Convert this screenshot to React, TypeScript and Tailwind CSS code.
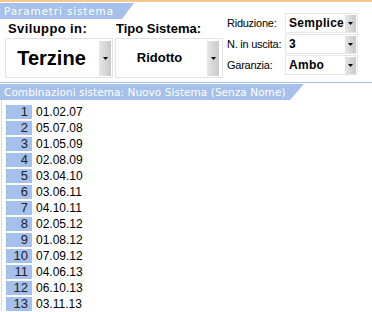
import React from "react";

const Arrow = () => (
  <svg width="5" height="3" viewBox="0 0 5 3" className="block">
    <polygon points="0,0 5,0 2.5,3" fill="#000" />
  </svg>
);

const DropBtn = ({ cls }: { cls: string }) => (
  <div className={`flex items-center justify-center bg-gradient-to-r from-[#e6e6e6] to-[#c9c9c9] ${cls}`}>
    <Arrow />
  </div>
);

const rows = [
  "01.02.07",
  "05.07.08",
  "01.05.09",
  "02.08.09",
  "03.04.10",
  "03.06.11",
  "04.10.11",
  "02.05.12",
  "01.08.12",
  "07.09.12",
  "04.06.13",
  "06.10.13",
  "03.11.13",
];

export default function App() {
  return (
    <div className="w-[372px] h-[312px] bg-white overflow-hidden relative" style={{ fontFamily: '"Liberation Sans", Arial, sans-serif' }}>
      <div className="h-[2px] bg-[#f6c88c]" />
      <div className="flex">
        {/* left part */}
        <div className="w-[226px] flex flex-col">
          <div className="mt-[1px] h-[16px] w-[134px] bg-[#a5c0ea] [clip-path:polygon(0_0,100%_0,calc(100%-12px)_100%,0_100%)] text-white text-[10.5px] leading-[16px] pl-[4px] tracking-[0.85px] whitespace-nowrap" style={{ fontFamily: '"DejaVu Sans", Verdana, sans-serif' }}>
            Parametri sistema
          </div>
          <div className="flex mt-[1px]">
            <div className="w-[111px] pl-[5px] flex flex-col">
              <div className="h-[18px] pl-[3px] text-[13px] leading-[18px] font-bold text-black tracking-[0.4px]">Sviluppo in:</div>
              <div className="h-[40px] w-[108px] border border-[#e3e3e3] flex items-center">
                <div className="flex-1 text-center text-[20px] font-bold text-black pr-[2px]">Terzine</div>
                <DropBtn cls="w-[12px] h-[35px] mr-[1px]" />
              </div>
            </div>
            <div className="w-[112px] pl-[4px] flex flex-col">
              <div className="h-[18px] pl-[1px] text-[13px] leading-[18px] font-bold text-black">Tipo Sistema:</div>
              <div className="h-[40px] w-[108px] border border-[#e3e3e3] flex items-center">
                <div className="flex-1 text-center text-[13px] font-bold text-black pr-[4px]">Ridotto</div>
                <DropBtn cls="w-[12px] h-[35px] mr-[3px]" />
              </div>
            </div>
          </div>
        </div>
        {/* right part */}
        <div className="flex-1 flex flex-col pt-[11px] gap-[1px]">
          {[
            ["Riduzione:", "Semplice"],
            ["N. in uscita:", "3"],
            ["Garanzia:", "Ambo"],
          ].map(([l, v]) => (
            <div key={l} className="flex h-[20px] items-center">
              <div className="w-[59px] pl-[1px] text-[11px] tracking-[-0.25px] text-black whitespace-nowrap">{l}</div>
              <div className="w-[73px] h-[20px] border border-[#e6e6e6] flex items-center">
                <div className="flex-1 pl-[3px] text-[12px] font-bold text-black tracking-[0.3px]">{v}</div>
                <DropBtn cls="w-[11px] h-[17px] mr-[1px]" />
              </div>
            </div>
          ))}
        </div>
      </div>
      {/* second section */}
      <div className="mt-[4px] border-t border-[#a5c0ea]">
        <div className="mt-[1px] h-[16px] w-[304px] bg-[#a5c0ea] [clip-path:polygon(0_0,100%_0,calc(100%-14px)_100%,0_100%)] text-white text-[10.5px] leading-[16px] pl-[4px] tracking-[0.05px] whitespace-nowrap" style={{ fontFamily: '"DejaVu Sans", Verdana, sans-serif' }}>
          Combinazioni sistema: Nuovo Sistema (Senza Nome)
        </div>
      </div>
      <div className="ml-[1px] border-l border-[#d8d8d8] pl-[4px] pt-[5px] flex flex-col gap-[2px]">
        {rows.map((r, i) => (
          <div key={i} className="flex h-[14px] items-center">
            <div className="w-[26px] h-[14px] bg-[#a5c0ea] text-right pr-[4px] text-[13px] leading-[14px] text-[#222]">{i + 1}</div>
            <div className="pl-[4px] text-[12px] leading-[14px] text-black">{r}</div>
          </div>
        ))}
      </div>
    </div>
  );
}
